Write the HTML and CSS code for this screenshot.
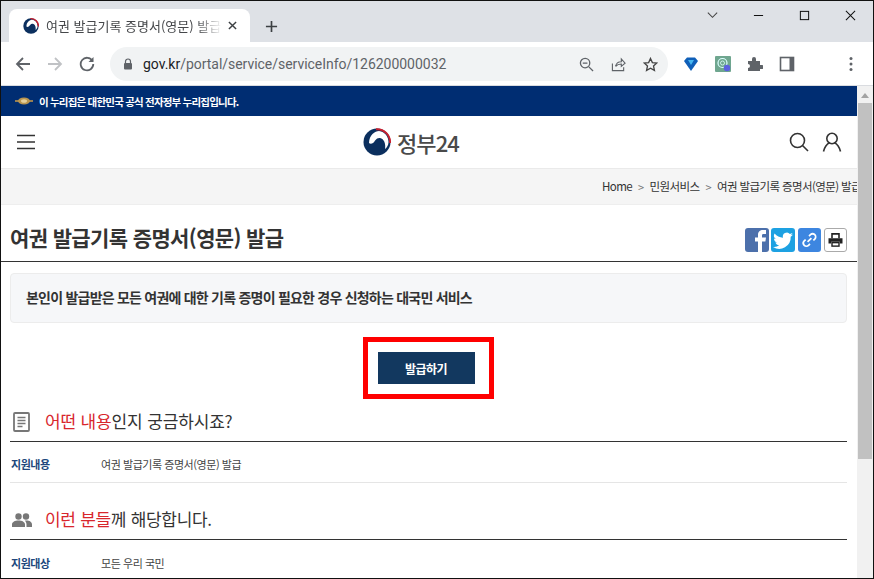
FILE: index.html
```html
<!DOCTYPE html>
<html lang="ko">
<head>
<meta charset="utf-8">
<title>여권 발급기록 증명서(영문) 발급</title>
<link rel="stylesheet" href="styles.css">
</head>
<body>
<div class="window">
  <div class="tabstrip">
    <div class="tab">
      <svg class="favicon" viewBox="0 0 28 28"><circle cx="14" cy="14" r="13.500" fill="#0b2f5e"/><path d="M6 15C6 7 12 3 16 3c6 .5 9.500 6 9.500 11 0 3-1.500 5.500-3.500 7 1-5-1-10.500-5-11-4-.5-5 3.500-7 5-1.500 1-3 1-4 0z" fill="#fff"/><path d="M13 1.200A13 13 0 0 1 27 15" fill="none" stroke="#c8202f" stroke-width="2.400"/></svg>
      <span class="tab-title">여권 발급기록 증명서(영문) 발급</span>
      <svg class="tab-x" viewBox="0 0 10 10"><path d="M1 1l8 8M9 1l-8 8" stroke="#3c4043" stroke-width="1.600"/></svg>
    </div>
    <svg class="new-tab" viewBox="0 0 14 14"><path d="M7 1v12M1 7h12" stroke="#3c4043" stroke-width="1.800"/></svg>
    <div class="win-controls">
      <svg class="wc wc-chev" viewBox="0 0 14 14"><path d="M2 4l5 5 5-5" fill="none" stroke="#444" stroke-width="1.100"/></svg>
      <svg class="wc" viewBox="0 0 12 12"><path d="M1 6h10" stroke="#111" stroke-width="1.100"/></svg>
      <svg class="wc" viewBox="0 0 12 12"><rect x="1.500" y="1.500" width="9" height="9" fill="none" stroke="#111" stroke-width="1.100"/></svg>
      <svg class="wc" viewBox="0 0 12 12"><path d="M1 1l10 10M11 1L1 11" stroke="#111" stroke-width="1.100"/></svg>
    </div>
  </div>
  <div class="toolbar">
    <svg class="nav" viewBox="0 0 16 16"><path d="M15 8H2M8 2L2 8l6 6" fill="none" stroke="#5f6368" stroke-width="1.800"/></svg>
    <svg class="nav" viewBox="0 0 16 16"><path d="M1 8h13M8 2l6 6-6 6" fill="none" stroke="#c0c2c5" stroke-width="1.800"/></svg>
    <svg class="nav" viewBox="0 0 16 16"><path d="M13.500 5A6.300 6.300 0 1 0 14.300 8" fill="none" stroke="#5f6368" stroke-width="1.800"/><path d="M14.500 1v5h-5z" fill="#5f6368"/></svg>
    <div class="omnibox">
      <svg class="lock" viewBox="0 0 10 12"><path d="M2.500 5V3.500a2.500 2.500 0 0 1 5 0V5" fill="none" stroke="#5f6368" stroke-width="1.200"/><rect x="1" y="5" width="8" height="6.500" rx="1" fill="#5f6368"/></svg>
      <span class="url"><b>gov.kr</b>/portal/service/serviceInfo/126200000032</span>
      <span class="omni-icons">
        <svg class="oi" viewBox="0 0 16 16"><circle cx="6.500" cy="6.500" r="5" fill="none" stroke="#5f6368" stroke-width="1.400"/><path d="M4 6.500h5M10.500 10.500L15 15" stroke="#5f6368" stroke-width="1.400"/></svg>
        <svg class="oi" viewBox="0 0 16 16"><path d="M1.500 7v7.500h12V11M5 10c.5-3.500 3-5 6-5V2l4 4.500L11 10V7.500C8.500 7.500 6.500 8 5 10z" fill="none" stroke="#5f6368" stroke-width="1.200"/></svg>
        <svg class="oi" viewBox="0 0 16 16"><path d="M8 1.500l2 4.400 4.700.5-3.500 3.200 1 4.700L8 11.900l-4.200 2.400 1-4.700L1.300 6.400 6 5.900z" fill="none" stroke="#444" stroke-width="1.400"/></svg>
      </span>
    </div>
    <div class="extensions">
      <svg class="ext" viewBox="0 0 16 16"><path d="M1 5l3-3.500h8L15 5 8 15z" fill="#0f5fb8"/><path d="M5 4h6l-3 5z" fill="#46b6f0"/></svg>
      <svg class="ext" viewBox="0 0 16 16"><rect width="16" height="16" rx="1" fill="#6fa68f"/><circle cx="7.500" cy="7" r="4.500" fill="none" stroke="#dff" stroke-width="1.200"/><circle cx="7.500" cy="7" r="2" fill="none" stroke="#dff" stroke-width=".8"/><circle cx="12" cy="12" r="3.200" fill="#5a5fe0"/></svg>
      <svg class="ext" viewBox="0 0 16 16"><path d="M1 5h4V3a2 2 0 0 1 4 0v2h4v4h2a2 2 0 0 1 0 4h-2v2H1v-3a2 2 0 0 0 0-4z" fill="#5f6368"/></svg>
      <svg class="ext" viewBox="0 0 16 16"><rect x="1.500" y="1.500" width="13" height="13" fill="#fff" stroke="#5f6368" stroke-width="1.600"/><rect x="10.500" y="1.500" width="4" height="13" fill="#5f6368"/></svg>
    </div>
    <svg class="menu" viewBox="0 0 4 16"><circle cx="2" cy="2.500" r="1.500" fill="#5f6368"/><circle cx="2" cy="8" r="1.500" fill="#5f6368"/><circle cx="2" cy="13.500" r="1.500" fill="#5f6368"/></svg>
  </div>
  <div class="viewport">
    <main class="page">
      <div class="gov-banner">
        <svg class="eg" viewBox="0 0 18 8"><path d="M0 4h4M14 4h4" stroke="#c79a4b" stroke-width="1.400"/><ellipse cx="9" cy="4" rx="6" ry="3.500" fill="#b9954f"/><ellipse cx="9" cy="4" rx="3" ry="1.800" fill="#e4cf9b"/></svg>
        <span>이 누리집은 대한민국 공식 전자정부 누리집입니다.</span>
      </div>
      <header class="site-header">
        <svg class="hamburger" viewBox="0 0 20 16"><path d="M1 1.500h18M1 8h18M1 14.500h18" stroke="#333" stroke-width="1.600"/></svg>
        <div class="logo">
          <svg class="logo-mark" viewBox="0 0 28 28"><circle cx="14" cy="14" r="13.500" fill="#0b2f5e"/><path d="M6 15C6 7 12 3 16 3c6 .5 9.500 6 9.500 11 0 3-1.500 5.500-3.500 7 1-5-1-10.500-5-11-4-.5-5 3.500-7 5-1.500 1-3 1-4 0z" fill="#fff"/><path d="M13 1.200A13 13 0 0 1 27 15" fill="none" stroke="#c8202f" stroke-width="2"/></svg>
          <span class="logo-text">정부24</span>
        </div>
        <div class="header-icons">
          <svg class="hi" viewBox="0 0 20 20"><circle cx="8.500" cy="8.500" r="7" fill="none" stroke="#333" stroke-width="1.600"/><path d="M13.500 13.500L19 19" stroke="#333" stroke-width="1.600"/></svg>
          <svg class="hi" viewBox="0 0 20 20"><circle cx="10" cy="6.500" r="5.200" fill="none" stroke="#333" stroke-width="1.600"/><path d="M1.500 19.500c.8-4 3.500-8 6-8.500M18.500 19.500c-.8-4-3.500-8-6-8.500" fill="none" stroke="#333" stroke-width="1.600"/></svg>
        </div>
      </header>
      <nav class="breadcrumb">
        <span>Home</span><i>&gt;</i><span>민원서비스</span><i>&gt;</i><span>여권 발급기록 증명서(영문) 발급</span>
      </nav>
      <div class="title-row">
        <h1>여권 발급기록 증명서(영문) 발급</h1>
        <div class="share">
          <span class="sb sb-fb"><svg viewBox="0 0 24 24"><path d="M13 24V13.500H10V9.500h3V7c0-3.500 2-5 5-5h3v4h-2.500c-1.200 0-1.500.6-1.500 1.500v2h4l-.6 4H17V24z" fill="#fff"/></svg></span>
          <span class="sb sb-tw"><svg viewBox="0 0 24 24"><path d="M22 6.500c-.8.400-1.500.6-2.300.7.800-.5 1.500-1.300 1.800-2.200-.8.500-1.700.8-2.600 1a4 4 0 0 0-6.900 3.700A11.500 11.500 0 0 1 3.600 5.500a4 4 0 0 0 1.200 5.400c-.6 0-1.300-.2-1.800-.5 0 2 1.400 3.700 3.200 4-.6.200-1.200.2-1.800.1.500 1.600 2 2.800 3.800 2.800A8 8 0 0 1 2 19a11.500 11.500 0 0 0 17.700-10.200c.9-.6 1.700-1.400 2.300-2.300z" fill="#fff"/></svg></span>
          <span class="sb sb-link"><svg viewBox="0 0 24 24"><path d="M10 14l4-4M11.500 8l1.500-1.500a3 3 0 0 1 4.500 4.500L16 12.500M12.500 16L11 17.500a3 3 0 0 1-4.500-4.500L8 11.500" fill="none" stroke="#fff" stroke-width="1.800"/></svg></span>
          <span class="sb sb-print"><svg viewBox="0 0 24 24"><path d="M8 10V5h8v5" fill="none" stroke="#222" stroke-width="1.800"/><path d="M4 10h16v6h-3v-2H7v2H4z" fill="#222"/><rect x="8" y="15" width="8" height="4" fill="none" stroke="#222" stroke-width="1.600"/></svg></span>
        </div>
      </div>
      <div class="summary">본인이 발급받은 모든 여권에 대한 기록 증명이 필요한 경우 신청하는 대국민 서비스</div>
      <div class="action">
        <a class="issue-btn">발급하기</a>
        <span class="highlight"></span>
      </div>
      <section class="info">
        <h2 class="sec-head">
          <svg class="sec-icon" viewBox="0 0 17 20"><rect x="1" y="1" width="15" height="18" rx="1" fill="none" stroke="#777" stroke-width="1.800"/><path d="M4.500 5.500h8M4.500 8.500h8M4.500 11.500h8M4.500 14.500h5" stroke="#777" stroke-width="1.400"/></svg>
          <span><em>어떤 내용</em>인지 궁금하시죠?</span>
        </h2>
        <div class="info-row"><b>지원내용</b><span>여권 발급기록 증명서(영문) 발급</span></div>
        <h2 class="sec-head sec-second">
          <svg class="sec-icon" viewBox="0 0 20 14"><circle cx="6.500" cy="3.500" r="3.200" fill="#777"/><circle cx="14" cy="3.500" r="3.200" fill="#777"/><path d="M0 14v-2.500C0 9 3 7.500 6.500 7.500S13 9 13 11.500V14zM14.500 14v-2.500c0-1.500-.6-2.800-1.600-3.800.5-.1 1-.2 1.600-.2 3 0 5.500 1.500 5.500 4V14z" fill="#777"/></svg>
          <span><em>이런 분들</em>께 해당합니다.</span>
        </h2>
        <div class="info-row info-last"><b>지원대상</b><span>모든 우리 국민</span></div>
      </section>
    </main>
    <div class="scrollbar">
      <span class="sb-up"></span>
      <span class="sb-thumb"></span>
    </div>
  </div>
</div>
</body>
</html>
```
FILE: styles.css
```css
* { box-sizing: border-box; }
html, body { margin: 0; height: 100%; overflow: hidden; background: #fff; }
body { font-family: "Noto Sans CJK KR", "Noto Sans", sans-serif; color: #333; }
.window {
  width: 874px; height: 579px; display: flex; flex-direction: column;
  border: 1px solid #111; overflow: hidden;
}
.tabstrip { height: 41px; flex: none; background: #dee1e6; display: flex; align-items: flex-end; position: relative; padding-left: 8px; }
.tab {
  width: 241px; height: 33px; background: #fff; border-radius: 8px 8px 0 0;
  display: flex; align-items: center; padding: 0 10px 0 14px;
}
.favicon { width: 16px; height: 16px; flex: none; }
.tab-title {
  font-size: 13px; color: #45474a; margin-left: 7px; width: 176px; white-space: nowrap; overflow: hidden; flex: none;
  -webkit-mask-image: linear-gradient(to right, #000 85%, transparent 100%);
  mask-image: linear-gradient(to right, #000 85%, transparent 100%);
}
.tab-x { width: 9px; height: 9px; margin-left: 6px; flex: none; }
.new-tab { width: 13px; height: 13px; margin: 0 0 9px 15px; }
.win-controls { position: absolute; right: 0; top: 0; height: 28px; display: flex; align-items: center; }
.wc { width: 11px; height: 11px; margin: 0 17px 0 18px; flex: none; }
.wc-chev { width: 13px; height: 13px; margin-right: 16px; }
.toolbar { height: 44px; flex: none; background: #fff; display: flex; align-items: center; padding: 1px 0 0 14px; border-bottom: 1px solid #dadce0; }
.nav { width: 16px; height: 16px; margin-right: 16px; flex: none; }
.omnibox {
  width: 558px; height: 34px; margin-left: -1px; background: #f1f3f4; border-radius: 17px;
  display: flex; align-items: center; padding: 0 10px 0 13px; flex: none;
}
.lock { width: 10px; height: 12px; flex: none; }
.url { font: 14px/1 "Roboto", sans-serif; color: #5f6368; margin-left: 10px; letter-spacing: -.03px; white-space: nowrap; }
.url b { font-weight: 400; color: #202124; }
.omni-icons { margin-left: auto; display: flex; gap: 17px; }
.oi { width: 15px; height: 15px; }
.extensions { display: flex; gap: 16px; margin-left: 15px; align-items: center; }
.ext { width: 16px; height: 16px; }
.menu { width: 4px; height: 16px; margin-left: 54px; flex: none; }
.viewport { flex: 1; display: flex; min-height: 0; }
.page { flex: 1; min-width: 0; overflow: hidden; }
.scrollbar { width: 16px; flex: none; background: #f1f1f1; display: flex; flex-direction: column; align-items: center; }
.sb-up { width: 0; height: 0; margin: 7px 0 5px; border: 4px solid transparent; border-top: 0; border-bottom: 5px solid #a3a3a3; }
.sb-thumb { width: 14px; height: 356px; background: #c1c1c1; }
.gov-banner { height: 30px; background: #002d72; color: #fff; display: flex; align-items: center; padding-left: 14px; font-size: 10.500px; font-weight: 700; letter-spacing: -.8px; }
.eg { width: 18px; height: 8px; margin-right: 6px; }
.site-header { height: 53px; display: flex; align-items: center; position: relative; padding: 0 15px; border-bottom: 1px solid #eaeaea; }
.hamburger { width: 20px; height: 16px; }
.logo { position: absolute; left: 362px; top: 12px; display: flex; align-items: center; }
.logo-mark { width: 28px; height: 28px; }
.logo-text { font-size: 22px; font-weight: 500; color: #4a4a4a; margin-left: 6px; letter-spacing: -.9px; line-height: 28px; }
.header-icons { margin-left: auto; display: flex; gap: 13px; }
.hi { width: 20px; height: 20px; }
.breadcrumb {
  height: 36px; padding: 0 0 2px 601px; background: #f5f5f5; border-bottom: 1px solid #eee; display: flex; align-items: center;
  font-size: 11.500px; color: #333; letter-spacing: -.6px; white-space: nowrap; overflow: hidden;
}
.breadcrumb span { flex: none; }
.breadcrumb i { font-style: normal; color: #777; margin: 3px 6px 0 6px; font-size: 11px; flex: none; }
.title-row { height: 57px; display: flex; align-items: center; justify-content: space-between; padding: 14px 10px 0 9px; border-bottom: 1px solid #333; }
h1 { margin: 0 0 6px; font-size: 21px; font-weight: 700; color: #333; letter-spacing: -.62px; }
.share { display: flex; gap: 3px; }
.sb { width: 23px; height: 24px; border-radius: 3px; display: block; }
.sb svg { display: block; width: 100%; height: 100%; }
.sb-fb { background: #4c70ab; width: 24px; margin-right: -1px; }
.sb-tw { background: #1da1e2; width: 24px; }
.sb-link { background: #3d86e0; }
.sb-print { background: #fff; border: 1px solid #aaa; }
.summary {
  margin: 11px 10px 0 9px; height: 50px; background: #f6f7f9; border: 1px solid #ececec; border-radius: 4px;
  padding: 0 15px 2px; display: flex; align-items: center; font-size: 14px; font-weight: 700; color: #333; letter-spacing: -.78px;
}
.action { height: 90px; display: flex; align-items: flex-start; justify-content: center; padding: 29px 6px 0 0; position: relative; }
.issue-btn { width: 97px; height: 32px; background: #12385f; color: #fff; display: flex; align-items: center; justify-content: center; font-size: 12px; font-weight: 700; letter-spacing: -.5px; }
.highlight { position: absolute; left: 362px; top: 14px; width: 131px; height: 62px; border: 5px solid #f00; }
.info { padding: 0 10px 0 9px; }
.sec-head { margin: -16px 0 0; height: 45px; padding-bottom: 7px; display: flex; align-items: flex-end; border-bottom: 1px solid #333; font-size: 17px; font-weight: 400; color: #333; letter-spacing: -.15px; line-height: 26px; }
.sec-head em { font-style: normal; color: #d8262c; }
.sec-icon { width: 17px; height: 20px; margin: 0 15px 2px 3px; flex: none; }
.sec-second { margin-top: 0; height: 57px; letter-spacing: -.3px; }
.sec-second .sec-icon { width: 20px; height: 14px; margin: 0 13px 5px 2px; }
.info-row { height: 41px; padding-top: 4px; display: flex; align-items: center; font-size: 11px; letter-spacing: -.45px; color: #444; border-bottom: 1px solid #e5e5e5; }
.info-row b { width: 91px; flex: none; color: #20477c; font-weight: 700; padding-left: 1px; }
.info-last { border-bottom: 0; }
```
